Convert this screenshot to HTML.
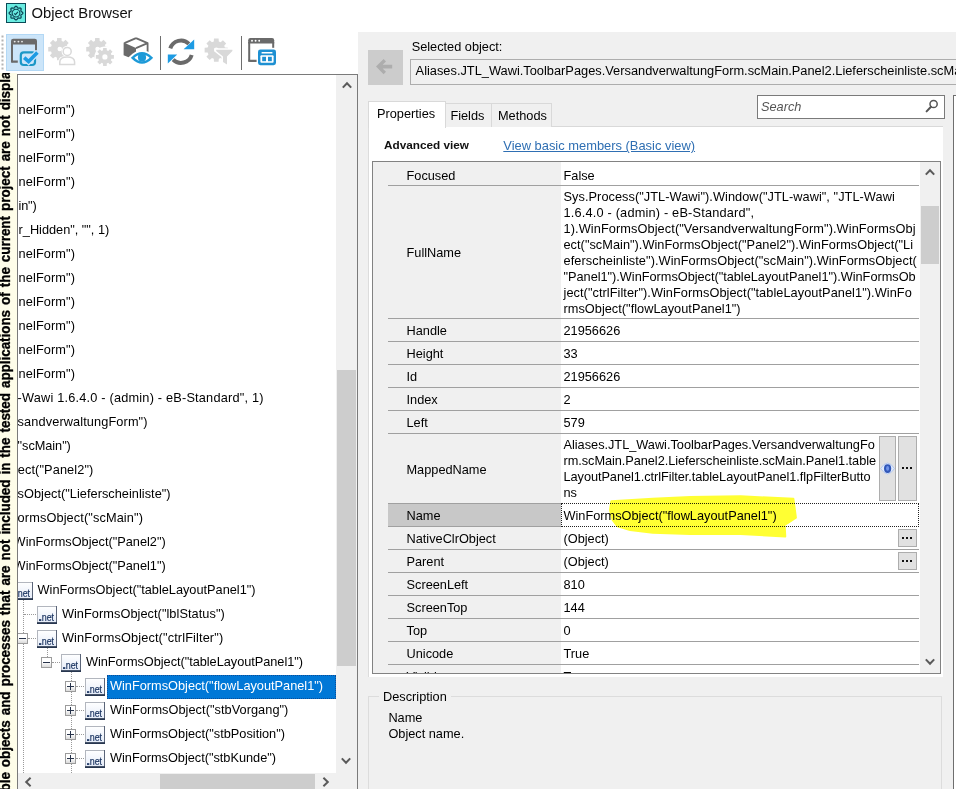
<!DOCTYPE html>
<html>
<head>
<meta charset="utf-8">
<title>Object Browser</title>
<style>
html,body{margin:0;padding:0;}
body{width:956px;height:789px;overflow:hidden;background:#fff;position:relative;
  font-family:"Liberation Sans",sans-serif;font-size:12.75px;color:#000;}
.abs{position:absolute;}
.t{position:absolute;white-space:pre;line-height:16px;height:16px;}
/* title */
#appicon{left:6px;top:3px;width:20px;height:20px;}
#title{left:31.4px;top:3.3px;font-size:14.8px;line-height:20px;height:20px;color:#111;}
/* toolbar */
#tbsvg{left:0;top:28px;width:300px;height:50px;}
/* left strip */
#strip{left:0;top:73px;width:17px;height:716px;background:#fefde9;overflow:hidden;}
#strip span{position:absolute;left:-3px;top:840.4px;white-space:pre;font-weight:bold;font-size:13.4px;line-height:16px;
  word-spacing:1.3px;color:#000;-webkit-text-stroke:0.3px #000;transform-origin:0 0;transform:rotate(-90deg) scaleY(1.1);}
/* tree */
#tree{left:17px;top:74px;width:339px;height:720px;border:1px solid #7a7a7a;background:#fff;overflow:hidden;}
#tree .row{position:absolute;left:0;height:24px;line-height:24px;white-space:pre;color:#000;}
#tree .ic{position:absolute;width:20px;height:18px;}
#tree .ex{position:absolute;width:11px;height:11px;}
#vsb{left:318px;top:0;width:21px;height:698px;background:#f0f0f0;}
#hsb{left:0;top:698px;width:339px;height:17px;background:#f0f0f0;}
.thumb{position:absolute;background:#cdcdcd;}
/* right panel */
#rp{left:358px;top:32px;width:598px;height:757px;background:#f0f0f0;}
#back{left:368px;top:50px;width:35px;height:35px;background:#cccccc;}
#selbox{left:410px;top:59px;width:560px;height:24px;border:1px solid #adadad;background:#f0f0f0;}
#search{left:757px;top:95px;width:186px;height:22px;border:1px solid #7a7a7a;background:#fff;}
.tab{position:absolute;box-sizing:border-box;background:#f0f0f0;border:1px solid #d9d9d9;border-bottom:none;}
#page{left:368px;top:127px;width:574.5px;height:550px;background:#fff;box-sizing:border-box;border-left:1px solid #dcdcdc;}
#grid{left:372px;top:161px;width:567px;height:511px;border:1px solid #828282;background:#fff;overflow:hidden;}
#gleft{left:0;top:0;width:188px;height:511px;background:#f0f0f0;}
.sep{position:absolute;left:15px;width:531px;height:1px;background:#a0a0a0;}
#gsb{left:547px;top:0;width:20px;height:511px;background:#f0f0f0;}
.gn{position:absolute;left:33.5px;white-space:pre;line-height:16px;}
.gv{position:absolute;left:190.5px;white-space:pre;line-height:16px;}
.btn{position:absolute;box-sizing:border-box;background:#e1e1e1;border:1px solid #adadad;}
#desc{left:368px;top:696px;width:572px;height:120px;border:1px solid #dcdcdc;}
</style>
</head>
<body>

<svg width="0" height="0" style="position:absolute">
  <defs>
    <linearGradient id="ng" x1="0" y1="0" x2="0" y2="1"><stop offset="0" stop-color="#ffffff"/><stop offset="1" stop-color="#e4ebf8"/></linearGradient>
    <linearGradient id="eg" x1="0" y1="0" x2="0" y2="1"><stop offset="0.45" stop-color="#ffffff"/><stop offset="1" stop-color="#d6d6d6"/></linearGradient>
    <g id="neticon">
      <rect x="0.5" y="0.5" width="19" height="16.5" fill="url(#ng)" stroke="#b2b6be"/>
      <rect x="19" y="0" width="1" height="18" fill="#5a6478"/>
      <rect x="0" y="16.2" width="20" height="1.8" fill="#27364f"/>
      <rect x="2" y="13.2" width="2.3" height="1.7" fill="#16305e"/>
      <text x="4.7" y="14.9" font-family="Liberation Sans, sans-serif" font-size="11.5" fill="#16305e" stroke="#16305e" stroke-width="0.2" textLength="12.4" lengthAdjust="spacingAndGlyphs">net</text>
    </g>
    <g id="exm">
      <rect x="0.5" y="0.5" width="10" height="10" fill="url(#eg)" stroke="#9c9c9c"/>
      <rect x="2" y="5" width="7" height="1" fill="#27334a"/>
    </g>
    <g id="exp">
      <rect x="0.5" y="0.5" width="10" height="10" fill="url(#eg)" stroke="#9c9c9c"/>
      <rect x="2" y="5" width="7" height="1" fill="#27334a"/>
      <rect x="5" y="2" width="1" height="7" fill="#27334a"/>
    </g>
  </defs>
</svg>

<!-- ===== title ===== -->
<svg id="appicon" class="abs" viewBox="0 0 20 20">
  <rect x="0.5" y="0.5" width="19" height="19" fill="#6aece1" stroke="#0b4a57"/>
  <path d="M16.85 10.10 L16.74 10.54 L16.42 10.95 L15.98 11.29 L15.53 11.58 L15.16 11.85 L14.94 12.15 L14.89 12.51 L14.96 12.96 L15.07 13.49 L15.14 14.04 L15.07 14.55 L14.84 14.94 L14.45 15.17 L13.94 15.24 L13.39 15.17 L12.86 15.06 L12.41 14.99 L12.05 15.04 L11.75 15.26 L11.48 15.63 L11.19 16.08 L10.85 16.52 L10.44 16.84 L10.00 16.95 L9.56 16.84 L9.15 16.52 L8.81 16.08 L8.52 15.63 L8.25 15.26 L7.95 15.04 L7.59 14.99 L7.14 15.06 L6.61 15.17 L6.06 15.24 L5.55 15.17 L5.16 14.94 L4.93 14.55 L4.86 14.04 L4.93 13.49 L5.04 12.96 L5.11 12.51 L5.06 12.15 L4.84 11.85 L4.47 11.58 L4.02 11.29 L3.58 10.95 L3.26 10.54 L3.15 10.10 L3.26 9.66 L3.58 9.25 L4.02 8.91 L4.47 8.62 L4.84 8.35 L5.06 8.05 L5.11 7.69 L5.04 7.24 L4.93 6.71 L4.86 6.16 L4.93 5.65 L5.16 5.26 L5.55 5.03 L6.06 4.96 L6.61 5.03 L7.14 5.14 L7.59 5.21 L7.95 5.16 L8.25 4.94 L8.52 4.57 L8.81 4.12 L9.15 3.68 L9.56 3.36 L10.00 3.25 L10.44 3.36 L10.85 3.68 L11.19 4.12 L11.48 4.57 L11.75 4.94 L12.05 5.16 L12.41 5.21 L12.86 5.14 L13.39 5.03 L13.94 4.96 L14.45 5.03 L14.84 5.26 L15.07 5.65 L15.14 6.16 L15.07 6.71 L14.96 7.24 L14.89 7.69 L14.94 8.05 L15.16 8.35 L15.53 8.62 L15.98 8.91 L16.42 9.25 L16.74 9.66Z" fill="none" stroke="#0d4656" stroke-width="1.25" stroke-linejoin="round"/>
  <circle cx="10" cy="10.1" r="3.9" fill="none" stroke="#0d4656" stroke-width="1.1"/>
  <path d="M8.2 10.3 l1.3 1.3 2.4 -2.7" fill="none" stroke="#0d4656" stroke-width="1.2"/>
</svg>
<div id="title" class="t">Object Browser</div>

<!-- ===== toolbar ===== -->
<svg id="tbsvg" class="abs" viewBox="0 28 300 50">
  <!-- gripper -->
  <g fill="#b4b4b4">
    <rect x="1.5" y="35.5" width="2" height="2"/><rect x="1.5" y="39.5" width="2" height="2"/><rect x="1.5" y="43.5" width="2" height="2"/>
    <rect x="1.5" y="47.5" width="2" height="2"/><rect x="1.5" y="51.5" width="2" height="2"/><rect x="1.5" y="55.5" width="2" height="2"/>
    <rect x="1.5" y="59.5" width="2" height="2"/><rect x="1.5" y="63.5" width="2" height="2"/><rect x="1.5" y="67.5" width="2" height="2"/>
  </g>
  <!-- selected button -->
  <rect x="6.5" y="34.5" width="37" height="36" fill="#cce5f9" stroke="#b3d8f5"/>
  <!-- icon1: window + check -->
  <g fill="#6a6a6a">
    <path d="M11 41 q0 -2.2 2.2 -2.2 h21.6 q2.2 0 2.2 2.2 v3.6 h-26z"/>
    <rect x="11" y="43" width="2" height="19.6"/>
    <path d="M11 60.6 h6.8 v2.1 h-4.6 q-2.2 0 -2.2 -2.2z"/>
    <rect x="35" y="43" width="2" height="7.2"/>
  </g>
  <g fill="#e8e8e8"><circle cx="14.7" cy="41.6" r="0.95"/><circle cx="18.4" cy="41.6" r="0.95"/><circle cx="22" cy="41.6" r="0.95"/></g>
  <rect x="20.8" y="52.4" width="14.2" height="12.6" rx="3" fill="#cce5f9" stroke="#1c97c6" stroke-width="2.2"/>
  <path d="M24.2 57.6 L28.6 61.6 L37.2 52.8" fill="none" stroke="#cce5f9" stroke-width="6" />
  <path d="M24.2 57.6 L28.6 61.6 L37.4 52.6" fill="none" stroke="#1d9be3" stroke-width="3.6"/>
  <!-- icon2: gear + person -->
  <g fill="#d9d9d9">
    <path fill-rule="evenodd" d="M67.56 46.80 L70.38 47.00 L70.38 51.40 L67.56 51.60 L66.84 53.34 L68.70 55.48 L65.58 58.60 L63.44 56.74 L61.70 57.46 L61.50 60.28 L57.10 60.28 L56.90 57.46 L55.16 56.74 L53.02 58.60 L49.90 55.48 L51.76 53.34 L51.04 51.60 L48.22 51.40 L48.22 47.00 L51.04 46.80 L51.76 45.06 L49.90 42.92 L53.02 39.80 L55.16 41.66 L56.90 40.94 L57.10 38.12 L61.50 38.12 L61.70 40.94 L63.44 41.66 L65.58 39.80 L68.70 42.92 L66.84 45.06 Z M62.10 49.00 a2.30 2.30 0 1 0 -4.60 0 a2.30 2.30 0 1 0 4.60 0z"/>
  </g>
  <circle cx="67.2" cy="51.4" r="5.6" fill="#fff"/>
  <path d="M58 66.4 v-4.2 q0 -6.4 9.2 -6.4 q9.2 0 9.2 6.4 v4.2z" fill="#fff"/>
  <circle cx="67.2" cy="51.4" r="4" fill="#fff" stroke="#d9d9d9" stroke-width="1.5"/>
  <path d="M59.8 64.6 v-2.6 q0 -5 7.4 -5 q7.4 0 7.4 5 v2.6z" fill="#fff" stroke="#d9d9d9" stroke-width="1.5"/>
  <!-- icon3: two gears -->
  <g fill="#d9d9d9">
    <path fill-rule="evenodd" d="M105.56 46.80 L108.38 47.00 L108.38 51.40 L105.56 51.60 L104.84 53.34 L106.70 55.48 L103.58 58.60 L101.44 56.74 L99.70 57.46 L99.50 60.28 L95.10 60.28 L94.90 57.46 L93.16 56.74 L91.02 58.60 L87.90 55.48 L89.76 53.34 L89.04 51.60 L86.22 51.40 L86.22 47.00 L89.04 46.80 L89.76 45.06 L87.90 42.92 L91.02 39.80 L93.16 41.66 L94.90 40.94 L95.10 38.12 L99.50 38.12 L99.70 40.94 L101.44 41.66 L103.58 39.80 L106.70 42.92 L104.84 45.06 Z M99.90 49.00 a2.30 2.30 0 1 0 -4.60 0 a2.30 2.30 0 1 0 4.60 0z"/>
  </g>
  <circle cx="105" cy="57" r="10.6" fill="#fff"/>
  <path fill="#d9d9d9" fill-rule="evenodd" d="M111.43 55.00 L113.92 55.11 L113.92 58.69 L111.43 58.80 L110.86 60.18 L112.55 62.01 L110.01 64.55 L108.18 62.86 L106.80 63.43 L106.69 65.92 L103.11 65.92 L103.00 63.43 L101.62 62.86 L99.79 64.55 L97.25 62.01 L98.94 60.18 L98.37 58.80 L95.88 58.69 L95.88 55.11 L98.37 55.00 L98.94 53.62 L97.25 51.79 L99.79 49.25 L101.62 50.94 L103.00 50.37 L103.11 47.88 L106.69 47.88 L106.80 50.37 L108.18 50.94 L110.01 49.25 L112.55 51.79 L110.86 53.62 Z M107.50 56.90 a2.60 2.60 0 1 0 -5.20 0 a2.60 2.60 0 1 0 5.20 0z"/>
  <!-- icon4: cube + eye -->
  <path d="M136 38.2 L147.6 43.2 L147.6 52 M136 38.2 L124.4 43.2 M136 48.2 L147.6 43.2" fill="none" stroke="#6a6a6a" stroke-width="1.8" stroke-linejoin="round"/>
  <path d="M123.6 42.6 L136 48 L136 60.2 L123.6 55.2z" fill="#6a6a6a"/>
  <path d="M130.6 57.8 Q142 46.4 153.4 57.8 Q142 69.2 130.6 57.8z" fill="#fff" stroke="#fff" stroke-width="3.5"/>
  <path d="M132.6 57.8 Q142 48.6 151.4 57.8 Q142 67 132.6 57.8z" fill="#fff" stroke="#1d9ad8" stroke-width="2.4"/>
  <circle cx="142" cy="57.4" r="4.1" fill="#1d9ad8"/>
  <!-- separators -->
  <rect x="160" y="36" width="1" height="34" fill="#6e6e6e"/>
  <rect x="241" y="36" width="1" height="34" fill="#6e6e6e"/>
  <!-- icon5: refresh -->
  <path d="M170.29 48.43 A11.2 11.2 0 0 1 188.9 43.8" fill="none" stroke="#6a6a6a" stroke-width="4"/>
  <path d="M191.71 54.97 A11.2 11.2 0 0 1 173.1 59.6" fill="none" stroke="#6a6a6a" stroke-width="4"/>
  <path d="M194.2 39.4 V49.3 H183.6z" fill="#1d9be3"/>
  <path d="M167.8 63.4 V54.5 H177.2z" fill="#1d9be3"/>
  <!-- icon6: gear + funnel -->
  <path fill="#d9d9d9" fill-rule="evenodd" d="M224.94 47.59 L227.97 47.78 L227.97 52.42 L224.94 52.61 L224.19 54.44 L226.19 56.71 L222.91 59.99 L220.64 57.99 L218.81 58.74 L218.62 61.77 L213.98 61.77 L213.79 58.74 L211.96 57.99 L209.69 59.99 L206.41 56.71 L208.41 54.44 L207.66 52.61 L204.63 52.42 L204.63 47.78 L207.66 47.59 L208.41 45.76 L206.41 43.49 L209.69 40.21 L211.96 42.21 L213.79 41.46 L213.98 38.43 L218.62 38.43 L218.81 41.46 L220.64 42.21 L222.91 40.21 L226.19 43.49 L224.19 45.76 Z M218.60 49.80 a2.30 2.30 0 1 0 -4.60 0 a2.30 2.30 0 1 0 4.60 0z"/>
  <path d="M214.4 48.2 H234 V51.6 L228.4 57 V66.6 L221.4 62.6 V57 L214.4 51.6z" fill="#fff"/>
  <path d="M216.2 49.8 H232.4 V51 L227 56.4 V64.6 L223 62 V56.4 L216.2 51z" fill="#d9d9d9"/>
  <!-- icon7: window + blue panel -->
  <g fill="#6a6a6a">
    <path d="M248.2 40.2 q0 -2.2 2.2 -2.2 h21.6 q2.2 0 2.2 2.2 v3.4 h-26z"/>
    <rect x="248.2" y="42" width="2" height="19.8"/>
    <path d="M248.2 59.8 h8.8 v2.1 h-6.6 q-2.2 0 -2.2 -2.2z"/>
    <rect x="272.2" y="42" width="2" height="5.8"/>
  </g>
  <g fill="#fff"><circle cx="252" cy="40.7" r="0.95"/><circle cx="255.6" cy="40.7" r="0.95"/><circle cx="259.2" cy="40.7" r="0.95"/></g>
  <rect x="256.6" y="48" width="20.8" height="18.6" rx="3" fill="#fff"/>
  <rect x="258" y="49.4" width="18" height="15.8" rx="2.4" fill="#1e90d2"/>
  <rect x="261.6" y="52" width="10.8" height="1.5" fill="#fff"/>
  <rect x="260.4" y="55.2" width="13.2" height="7.6" rx="1" fill="#fff"/>
  <rect x="262.2" y="56.8" width="3.8" height="4.4" fill="#1e90d2"/>
  <rect x="268" y="56.8" width="3.8" height="4.4" fill="#1e90d2"/>
</svg>

<!-- ===== left strip ===== -->
<div id="strip" class="abs"><span id="vt">Some of the available objects and processes that are not included in the tested applications of the current project are not displayed.</span></div>

<!-- ===== tree ===== -->
<div id="tree" class="abs">
<div class="row" style="left:0.6px;top:23px;letter-spacing:0.095px">nelForm&quot;)</div>
<div class="row" style="left:0.6px;top:47px;letter-spacing:0.095px">nelForm&quot;)</div>
<div class="row" style="left:0.6px;top:71px;letter-spacing:0.095px">nelForm&quot;)</div>
<div class="row" style="left:0.6px;top:95px;letter-spacing:0.095px">nelForm&quot;)</div>
<div class="row" style="left:0.6px;top:119px;letter-spacing:-0.201px">in&quot;)</div>
<div class="row" style="left:0.6px;top:143px;letter-spacing:-0.013px">r_Hidden&quot;, &quot;&quot;, 1)</div>
<div class="row" style="left:0.6px;top:167px;letter-spacing:0.095px">nelForm&quot;)</div>
<div class="row" style="left:0.6px;top:191px;letter-spacing:0.095px">nelForm&quot;)</div>
<div class="row" style="left:0.6px;top:215px;letter-spacing:0.095px">nelForm&quot;)</div>
<div class="row" style="left:0.6px;top:239px;letter-spacing:0.095px">nelForm&quot;)</div>
<div class="row" style="left:0.6px;top:263px;letter-spacing:0.095px">nelForm&quot;)</div>
<div class="row" style="left:0.6px;top:287px;letter-spacing:0.095px">nelForm&quot;)</div>
<div class="row" style="left:-0.4px;top:311px;letter-spacing:0.193px">-Wawi 1.6.4.0 - (admin) - eB-Standard&quot;, 1)</div>
<div class="row" style="left:-0.4px;top:335px;letter-spacing:0.109px">sandverwaltungForm&quot;)</div>
<div class="row" style="left:-0.4px;top:359px;letter-spacing:-0.054px">&quot;scMain&quot;)</div>
<div class="row" style="left:-3.2px;top:383px;letter-spacing:0.108px">ject(&quot;Panel2&quot;)</div>
<div class="row" style="left:-0.4px;top:407px;letter-spacing:0.028px">sObject(&quot;Lieferscheinliste&quot;)</div>
<div class="row" style="left:-0.4px;top:431px;letter-spacing:0.114px">ormsObject(&quot;scMain&quot;)</div>
<div class="abs" style="left:89px;top:600px;width:229px;height:24px;background:#0078d7;box-sizing:border-box;border:1px dotted #0d4d96"></div>
<div class="row" style="left:-4.4px;top:455px;letter-spacing:-0.004px">WinFormsObject(&quot;Panel2&quot;)</div>
<div class="row" style="left:-4.4px;top:479px;letter-spacing:-0.004px">WinFormsObject(&quot;Panel1&quot;)</div>
<div class="row" style="left:19.6px;top:503px;letter-spacing:-0.006px">WinFormsObject(&quot;tableLayoutPanel1&quot;)</div>
<div class="row" style="left:43.9px;top:527px;letter-spacing:0.056px">WinFormsObject(&quot;lblStatus&quot;)</div>
<div class="row" style="left:43.9px;top:551px;letter-spacing:0.128px">WinFormsObject(&quot;ctrlFilter&quot;)</div>
<div class="row" style="left:68.0px;top:575px;letter-spacing:-0.032px">WinFormsObject(&quot;tableLayoutPanel1&quot;)</div>
<div class="row" style="left:92.0px;top:599px;letter-spacing:-0.004px;color:#fff">WinFormsObject(&quot;flowLayoutPanel1&quot;)</div>
<div class="row" style="left:92.0px;top:623px;letter-spacing:0.051px">WinFormsObject(&quot;stbVorgang&quot;)</div>
<div class="row" style="left:92.0px;top:647px;letter-spacing:0.005px">WinFormsObject(&quot;stbPosition&quot;)</div>
<div class="row" style="left:92.0px;top:671px;letter-spacing:-0.014px">WinFormsObject(&quot;stbKunde&quot;)</div>
<div class="abs" style="left:5px;top:525px;width:0;height:173px;border-left:1px dotted #9a9a9a"></div>
<div class="abs" style="left:6px;top:539px;height:0;width:12px;border-top:1px dotted #9a9a9a"></div>
<div class="abs" style="left:10px;top:563px;height:0;width:8px;border-top:1px dotted #9a9a9a"></div>
<div class="abs" style="left:29px;top:573px;width:0;height:9px;border-left:1px dotted #9a9a9a"></div>
<div class="abs" style="left:34px;top:587px;height:0;width:8px;border-top:1px dotted #9a9a9a"></div>
<div class="abs" style="left:53px;top:597px;width:0;height:101px;border-left:1px dotted #9a9a9a"></div>
<div class="abs" style="left:58px;top:611px;height:0;width:8px;border-top:1px dotted #9a9a9a"></div>
<div class="abs" style="left:58px;top:635px;height:0;width:8px;border-top:1px dotted #9a9a9a"></div>
<div class="abs" style="left:58px;top:659px;height:0;width:8px;border-top:1px dotted #9a9a9a"></div>
<div class="abs" style="left:58px;top:683px;height:0;width:8px;border-top:1px dotted #9a9a9a"></div>
<svg class="ic" style="left:-5px;top:507px" viewBox="0 0 20 18"><use href="#neticon"/></svg>
<svg class="ic" style="left:19px;top:531px" viewBox="0 0 20 18"><use href="#neticon"/></svg>
<svg class="ic" style="left:19px;top:555px" viewBox="0 0 20 18"><use href="#neticon"/></svg>
<svg class="ic" style="left:43px;top:579px" viewBox="0 0 20 18"><use href="#neticon"/></svg>
<svg class="ic" style="left:67px;top:603px" viewBox="0 0 20 18"><use href="#neticon"/></svg>
<svg class="ic" style="left:67px;top:627px" viewBox="0 0 20 18"><use href="#neticon"/></svg>
<svg class="ic" style="left:67px;top:651px" viewBox="0 0 20 18"><use href="#neticon"/></svg>
<svg class="ic" style="left:67px;top:675px" viewBox="0 0 20 18"><use href="#neticon"/></svg>
<svg class="ex" style="left:-1px;top:558px" viewBox="0 0 11 11"><use href="#exm"/></svg>
<svg class="ex" style="left:23px;top:582px" viewBox="0 0 11 11"><use href="#exm"/></svg>
<svg class="ex" style="left:47px;top:606px" viewBox="0 0 11 11"><use href="#exp"/></svg>
<svg class="ex" style="left:47px;top:630px" viewBox="0 0 11 11"><use href="#exp"/></svg>
<svg class="ex" style="left:47px;top:654px" viewBox="0 0 11 11"><use href="#exp"/></svg>
<svg class="ex" style="left:47px;top:678px" viewBox="0 0 11 11"><use href="#exp"/></svg>
<div id="vsb" class="abs"><div class="thumb" style="left:1px;top:295px;width:19px;height:296px"></div><svg class="abs" style="left:6px;top:6px" width="10" height="8" viewBox="0 0 10 8"><path d="M0.8 6.6 L5 2.2 L9.2 6.6" fill="none" stroke="#5a5a5a" stroke-width="2"/></svg><svg class="abs" style="left:5px;top:682px" width="10" height="8" viewBox="0 0 10 8"><path d="M0.8 1.4 L5 5.8 L9.2 1.4" fill="none" stroke="#5a5a5a" stroke-width="2"/></svg></div>
<div id="hsb" class="abs"><div class="thumb" style="left:142px;top:1px;width:155px;height:16px"></div><svg class="abs" style="left:6px;top:4px" width="8" height="10" viewBox="0 0 8 10"><path d="M6.6 0.8 L2.2 5 L6.6 9.2" fill="none" stroke="#5a5a5a" stroke-width="2"/></svg><svg class="abs" style="left:304px;top:4px" width="8" height="10" viewBox="0 0 8 10"><path d="M1.4 0.8 L5.8 5 L1.4 9.2" fill="none" stroke="#5a5a5a" stroke-width="2"/></svg><div class="abs" style="left:318px;top:0;width:21px;height:17px;background:#f0f0f0"></div></div>
</div>

<!-- ===== right panel ===== -->
<div id="rp" class="abs"></div>
<div id="back" class="abs"><svg width="35" height="35" viewBox="0 0 35 35"><path d="M8 16.6 L15.6 9 L18 11.4 L14.6 14.8 H24.2 V18.4 H14.6 L18 21.8 L15.6 24.2z" fill="#adadad"/></svg></div>
<div class="t" style="left:411.7px;top:39.3px">Selected object:</div>
<div id="selbox" class="abs"></div>
<div class="t" style="left:415.6px;top:62.6px;font-size:12.82px">Aliases.JTL_Wawi.ToolbarPages.VersandverwaltungForm.scMain.Panel2.Lieferscheinliste.scMain.Panel1.tableLayoutPanel1</div>
<div class="abs" style="left:953px;top:95px;width:10px;height:700px;background:#fff;border:1px solid #6e6e6e;box-sizing:border-box"></div>
<div id="search" class="abs"></div>
<div class="t" style="left:761px;top:99px;font-style:italic;color:#555">Search</div>
<svg class="abs" style="left:924px;top:98px" width="16" height="16" viewBox="0 0 16 16"><circle cx="9.6" cy="6" r="3.6" fill="none" stroke="#555" stroke-width="1.5"/><path d="M7 8.8 L2.6 13.4" stroke="#555" stroke-width="2" stroke-linecap="round"/></svg>
<div id="page" class="abs"></div>
<div class="abs" style="left:445px;top:126px;width:498px;height:1px;background:#d9d9d9"></div>
<div class="tab" style="left:445px;top:103px;width:47px;height:24px"></div>
<div class="tab" style="left:491px;top:103px;width:61px;height:24px"></div>
<div class="tab" style="left:368px;top:101px;width:78px;height:27px;background:#fff"></div>
<div class="t" style="left:377px;top:106.2px">Properties</div>
<div class="t" style="left:450.4px;top:108px">Fields</div>
<div class="t" style="left:498px;top:108px">Methods</div>
<div class="t" style="left:384px;top:136.5px;font-weight:bold;font-size:11.75px;color:#111">Advanced view</div>
<div class="t" style="left:503.3px;top:138.3px;font-size:12.9px;color:#2f6fb3;text-decoration:underline">View basic members (Basic view)</div>
<div id="grid" class="abs">
<div id="gleft" class="abs"></div>
<div class="abs" style="left:15px;top:342px;width:173px;height:22px;background:#c8c8c8"></div>
<div class="sep" style="top:23px"></div>
<div class="sep" style="top:156px"></div>
<div class="sep" style="top:179px"></div>
<div class="sep" style="top:202px"></div>
<div class="sep" style="top:225px"></div>
<div class="sep" style="top:248px"></div>
<div class="sep" style="top:271px"></div>
<div class="sep" style="top:341px"></div>
<div class="sep" style="top:364px"></div>
<div class="sep" style="top:387px"></div>
<div class="sep" style="top:410px"></div>
<div class="sep" style="top:433px"></div>
<div class="sep" style="top:456px"></div>
<div class="sep" style="top:479px"></div>
<div class="sep" style="top:502px"></div>
<div class="abs" style="left:188px;top:341px;width:358px;height:24px;box-sizing:border-box;border:1px dotted #222;background:#fff"></div>
<div class="gn" style="top:5.5px">Focused</div>
<div class="gv" style="top:5.5px">False</div>
<div class="gn" style="top:83.4px">FullName</div>
<div class="gv" style="top:26.6px;letter-spacing:0.055px">Sys.Process(&quot;JTL-Wawi&quot;).Window(&quot;JTL-wawi&quot;, &quot;JTL-Wawi</div>
<div class="gv" style="top:42.6px;letter-spacing:0.187px">1.6.4.0 - (admin) - eB-Standard&quot;,</div>
<div class="gv" style="top:58.6px;letter-spacing:0.094px">1).WinFormsObject(&quot;VersandverwaltungForm&quot;).WinFormsObj</div>
<div class="gv" style="top:74.6px;letter-spacing:0.031px">ect(&quot;scMain&quot;).WinFormsObject(&quot;Panel2&quot;).WinFormsObject(&quot;Li</div>
<div class="gv" style="top:90.6px;letter-spacing:0.069px">eferscheinliste&quot;).WinFormsObject(&quot;scMain&quot;).WinFormsObject(</div>
<div class="gv" style="top:106.6px;letter-spacing:-0.021px">&quot;Panel1&quot;).WinFormsObject(&quot;tableLayoutPanel1&quot;).WinFormsOb</div>
<div class="gv" style="top:122.6px;letter-spacing:0.059px">ject(&quot;ctrlFilter&quot;).WinFormsObject(&quot;tableLayoutPanel1&quot;).WinFo</div>
<div class="gv" style="top:138.6px;letter-spacing:0.028px">rmsObject(&quot;flowLayoutPanel1&quot;)</div>
<div class="gn" style="top:161.4px">Handle</div>
<div class="gv" style="top:161.4px">21956626</div>
<div class="gn" style="top:184.4px">Height</div>
<div class="gv" style="top:184.4px">33</div>
<div class="gn" style="top:207.4px">Id</div>
<div class="gv" style="top:207.4px">21956626</div>
<div class="gn" style="top:230.4px">Index</div>
<div class="gv" style="top:230.4px">2</div>
<div class="gn" style="top:253.4px">Left</div>
<div class="gv" style="top:253.4px">579</div>
<div class="gn" style="top:299.9px">MappedName</div>
<div class="gv" style="top:275.1px;letter-spacing:-0.016px">Aliases.JTL_Wawi.ToolbarPages.VersandverwaltungFo</div>
<div class="gv" style="top:291.1px;letter-spacing:-0.053px">rm.scMain.Panel2.Lieferscheinliste.scMain.Panel1.table</div>
<div class="gv" style="top:307.1px;letter-spacing:-0.060px">LayoutPanel1.ctrlFilter.tableLayoutPanel1.flpFilterButto</div>
<div class="gv" style="top:323.1px;letter-spacing:0.016px">ns</div>
<div class="gn" style="top:346.4px">Name</div>
<div class="gv" style="top:346.4px">WinFormsObject(&quot;flowLayoutPanel1&quot;)</div>
<div class="gn" style="top:369.4px">NativeClrObject</div>
<div class="gv" style="top:369.4px">(Object)</div>
<div class="gn" style="top:392.4px">Parent</div>
<div class="gv" style="top:392.4px">(Object)</div>
<div class="gn" style="top:415.4px">ScreenLeft</div>
<div class="gv" style="top:415.4px">810</div>
<div class="gn" style="top:438.4px">ScreenTop</div>
<div class="gv" style="top:438.4px">144</div>
<div class="gn" style="top:461.4px">Top</div>
<div class="gv" style="top:461.4px">0</div>
<div class="gn" style="top:484.4px">Unicode</div>
<div class="gv" style="top:484.4px">True</div>
<div class="gn" style="top:507.4px">Visible</div>
<div class="gv" style="top:507.4px">True</div>
<div class="btn" style="left:506px;top:274px;width:17px;height:65px"><svg class="abs" style="left:0px;top:24px" width="15" height="16" viewBox="0 0 15 16"><path d="M0.6 7.6 Q4 2.2 7.6 2 Q11.2 2.2 14.4 7.6 Q11.2 12.6 7.6 13 Q4 12.6 0.6 7.6z" fill="#dfe9fb" stroke="#a9c0ee" stroke-width="0.8"/><ellipse cx="7.6" cy="7.6" rx="3.6" ry="4.4" fill="#3157b8"/><ellipse cx="7.6" cy="7.4" rx="1.5" ry="2.4" fill="#7194ea"/></svg></div>
<div class="btn" style="left:525px;top:274px;width:19px;height:65px"><svg class="abs" style="left:3px;top:30px" width="10" height="2" viewBox="0 0 10 2"><rect x="0" y="0" width="2" height="2" fill="#111"/><rect x="4" y="0" width="2" height="2" fill="#111"/><rect x="8" y="0" width="2" height="2" fill="#111"/></svg></div>
<div class="btn" style="left:525px;top:367px;width:19px;height:18px"><svg class="abs" style="left:3px;top:7px" width="10" height="2" viewBox="0 0 10 2"><rect x="0" y="0" width="2" height="2" fill="#111"/><rect x="4" y="0" width="2" height="2" fill="#111"/><rect x="8" y="0" width="2" height="2" fill="#111"/></svg></div>
<div class="btn" style="left:525px;top:390px;width:19px;height:18px"><svg class="abs" style="left:3px;top:7px" width="10" height="2" viewBox="0 0 10 2"><rect x="0" y="0" width="2" height="2" fill="#111"/><rect x="4" y="0" width="2" height="2" fill="#111"/><rect x="8" y="0" width="2" height="2" fill="#111"/></svg></div>
<div id="gsb" class="abs"><div class="thumb" style="left:1px;top:44px;width:18px;height:58px"></div><svg class="abs" style="left:5px;top:6.3px" width="10" height="8" viewBox="0 0 10 8"><path d="M0.8 6.6 L5 2.2 L9.2 6.6" fill="none" stroke="#5a5a5a" stroke-width="2"/></svg><svg class="abs" style="left:5px;top:496px" width="10" height="8" viewBox="0 0 10 8"><path d="M0.8 1.4 L5 5.8 L9.2 1.4" fill="none" stroke="#5a5a5a" stroke-width="2"/></svg></div>
</div>
<svg class="abs" style="left:0;top:0;mix-blend-mode:multiply;pointer-events:none" width="956" height="789" viewBox="0 0 956 789"><polygon points="611.3,501.3 652.8,498.8 690.4,497.0 740.6,496.3 793.4,498.8 795.9,517.6 788.3,522.7 784.6,525.0 785.3,536.5 740.6,534.0 690.0,534.0 652.8,532.7 630.0,530.0 617.6,526.4 612.6,520.0 610.0,510.0" fill="#ffff33" stroke="#ffff33" stroke-width="2" stroke-linejoin="round"/></svg>
<div id="desc" class="abs"></div>
<div class="t" style="left:379px;top:689px;padding:0 4px;background:#f0f0f0">Description</div>
<div class="t" style="left:388.4px;top:710.3px">Name</div>
<div class="t" style="left:388.4px;top:726.4px">Object name.</div>

</body>
</html>
